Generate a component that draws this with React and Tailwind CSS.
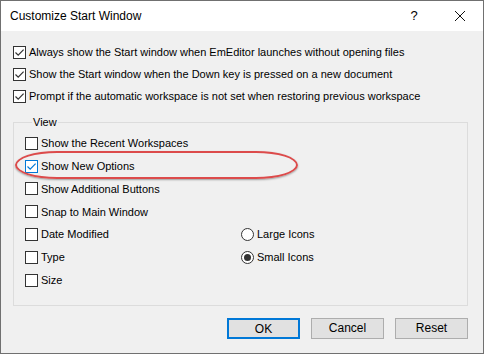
import React from 'react';

function CheckBox({ checked, focus }) {
  return (
    <span
      className={`relative flex h-[13px] w-[13px] shrink-0 items-center justify-center border bg-white ${
        focus ? 'border-[#0078d7]' : 'border-[#333333]'
      }`}
    >
      {checked && (
        <svg width="11" height="11" viewBox="0 0 11 11" className="absolute">
          <path d="M1.5 5.5 L4.2 8.2 L9.6 2.6" fill="none" stroke={focus ? '#0078d7' : '#333333'} strokeWidth="1.2" />
        </svg>
      )}
    </span>
  );
}

function Radio({ checked }) {
  return (
    <span className="flex h-[13px] w-[13px] shrink-0 items-center justify-center rounded-full border border-[#333333] bg-white">
      {checked && <span className="h-[7px] w-[7px] rounded-full bg-[#333333]" />}
    </span>
  );
}

function Check({ label, checked, focus }) {
  return (
    <div className="flex h-full items-center gap-[3px]">
      <CheckBox checked={checked} focus={focus} />
      <span>{label}</span>
    </div>
  );
}

function Btn({ children, primary }) {
  return (
    <button
      className={`h-[21px] w-[73px] bg-[#e1e1e1] text-[12px] text-black ${
        primary ? 'border-2 border-[#0078d7]' : 'border border-[#adadad]'
      }`}
    >
      {children}
    </button>
  );
}

export default function App() {
  const font = { fontFamily: '"Liberation Sans", Arial, sans-serif' };
  return (
    <div
      className="flex h-[354px] w-[484px] flex-col border border-[#707070] bg-[#f0f0f0] text-[11px] text-black"
      style={font}
    >
      {/* Title bar */}
      <div className="flex h-[30px] shrink-0 items-center bg-white pl-[9px] text-[12px]">
        <span className="flex-1">Customize Start Window</span>
        <span className="w-[46px] text-center text-[13px]">?</span>
        <span className="flex w-[46px] items-center justify-center">
          <svg width="12" height="12" viewBox="0 0 12 12">
            <path d="M1 1 L11 11 M11 1 L1 11" stroke="#111" strokeWidth="1" fill="none" />
          </svg>
        </span>
      </div>

      {/* Body */}
      <div className="relative flex flex-1 flex-col pl-[12px] pr-[15px] pt-[10px]">
        <div className="h-[22px]">
          <Check checked label="Always show the Start window when EmEditor launches without opening files" />
        </div>
        <div className="h-[22px]">
          <Check checked label="Show the Start window when the Down key is pressed on a new document" />
        </div>
        <div className="h-[22px]">
          <Check checked label="Prompt if the automatic workspace is not set when restoring previous workspace" />
        </div>

        <fieldset className="mt-[9px] border border-[#dcdcdc] pb-[13px] pl-[11px] pt-[3px]">
          <legend className="ml-[7px] px-[1px] leading-[13px]">View</legend>
          <div className="h-[22.8px]">
            <Check label="Show the Recent Workspaces" />
          </div>
          <div className="h-[22.8px]">
            <Check checked focus label="Show New Options" />
          </div>
          <div className="h-[22.8px]">
            <Check label="Show Additional Buttons" />
          </div>
          <div className="h-[22.8px]">
            <Check label="Snap to Main Window" />
          </div>
          <div className="grid grid-cols-[216px_1fr]">
            <div className="h-[22.8px]">
              <Check label="Date Modified" />
            </div>
            <div className="flex h-[22.8px] items-center gap-[3px]">
              <Radio />
              <span>Large Icons</span>
            </div>
            <div className="h-[22.8px]">
              <Check label="Type" />
            </div>
            <div className="flex h-[22.8px] items-center gap-[3px]">
              <Radio checked />
              <span>Small Icons</span>
            </div>
            <div className="h-[22.8px]">
              <Check label="Size" />
            </div>
          </div>
        </fieldset>

        <div className="mt-[12px] flex justify-end gap-[11px]">
          <Btn primary>OK</Btn>
          <Btn>Cancel</Btn>
          <Btn>Reset</Btn>
        </div>

        {/* highlight annotation */}
        <div className="pointer-events-none absolute left-[14px] top-[120px] h-[28px] w-[283px] rounded-[42px/14px] border-[2px] border-[#dc4b4b] shadow-[0_1px_2px_rgba(0,0,0,0.35)]" />
      </div>
    </div>
  );
}
